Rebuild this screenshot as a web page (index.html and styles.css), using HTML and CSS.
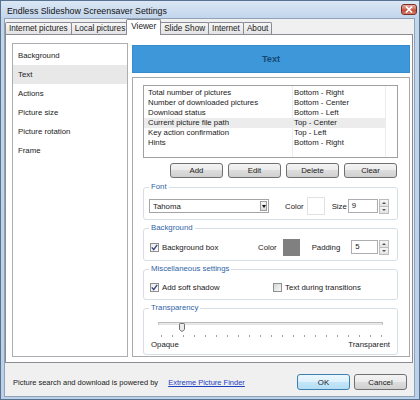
FILE: index.html
```html
<!DOCTYPE html>
<html lang="en">
<head>
  <meta charset="UTF-8" />
  <meta name="viewport" content="width=device-width, initial-scale=1" />
  <title>Endless Slideshow Screensaver Settings</title>
  <link rel="stylesheet" href="styles.css">
</head>
<body>
  <div class="window">
    <div class="titlebar">
      <span class="title">Endless Slideshow Screensaver Settings</span>
      <span class="close-btn">
        <svg width="8" height="7" viewBox="0 0 8 7"><path d="M1 0.5 L7 6.5 M7 0.5 L1 6.5" stroke="#fff" stroke-width="1.7" /></svg>
      </span>
    </div>

    <div class="client">
      <div class="tabs">
        <div class="tab">Internet pictures</div>
        <div class="tab">Local pictures</div>
        <div class="tab active">Viewer</div>
        <div class="tab">Slide Show</div>
        <div class="tab">Internet</div>
        <div class="tab">About</div>
      </div>

      <div class="tab-page">
        <ul class="side-list">
          <li>Background</li>
          <li class="selected">Text</li>
          <li>Actions</li>
          <li>Picture size</li>
          <li>Picture rotation</li>
          <li>Frame</li>
        </ul>

        <div class="content">
          <div class="section-header">Text</div>

          <div class="section-box">
            <!-- text items shown on the screen -->
            <div class="item-list">
              <div class="item-row"><span>Total number of pictures</span><span>Bottom - Right</span></div>
              <div class="item-row"><span>Number of downloaded pictures</span><span>Bottom - Center</span></div>
              <div class="item-row"><span>Download status</span><span>Bottom - Left</span></div>
              <div class="item-row selected"><span>Current picture file path</span><span>Top - Center</span></div>
              <div class="item-row"><span>Key action confirmation</span><span>Top - Left</span></div>
              <div class="item-row"><span>Hints</span><span>Bottom - Right</span></div>
            </div>

            <div class="item-buttons">
              <button class="btn">Add</button>
              <button class="btn">Edit</button>
              <button class="btn">Delete</button>
              <button class="btn">Clear</button>
            </div>

            <fieldset class="group">
              <legend>Font</legend>
              <div class="row font-row">
                <div class="combo"><span>Tahoma</span><span class="combo-arrow"></span></div>
                <span class="font-color-label">Color</span>
                <span class="swatch swatch-white"></span>
                <span class="size-label">Size</span>
                <div class="spin">
                  <span class="spin-field">9</span>
                  <span class="spin-btns"><span class="up"></span><span class="down"></span></span>
                </div>
              </div>
            </fieldset>

            <fieldset class="group">
              <legend>Background</legend>
              <div class="row">
                <label class="check bg-check">
                  <span class="checkbox checked"><svg width="7" height="7" viewBox="0 0 7 7"><path d="M0.8 3.4 L2.7 5.6 L6.2 0.9" fill="none" stroke="#33477c" stroke-width="1.4" /></svg></span>
                  Background box
                </label>
                <span>Color</span>
                <span class="swatch swatch-gray"></span>
                <span class="padding-label">Padding</span>
                <div class="spin spin-narrow">
                  <span class="spin-field">5</span>
                  <span class="spin-btns"><span class="up"></span><span class="down"></span></span>
                </div>
              </div>
            </fieldset>

            <fieldset class="group">
              <legend>Miscellaneous settings</legend>
              <div class="row misc-row">
                <label class="check shadow-check">
                  <span class="checkbox checked"><svg width="7" height="7" viewBox="0 0 7 7"><path d="M0.8 3.4 L2.7 5.6 L6.2 0.9" fill="none" stroke="#33477c" stroke-width="1.4" /></svg></span>
                  Add soft shadow
                </label>
                <label class="check">
                  <span class="checkbox"></span>
                  Text during transitions
                </label>
              </div>
            </fieldset>

            <fieldset class="group">
              <legend>Transparency</legend>
              <div class="slider">
                <div class="slider-track"></div>
                <svg class="slider-thumb" width="6" height="9" viewBox="0 0 6 9"><path d="M0.5 1.2 Q0.5 0.5 1.2 0.5 H4.8 Q5.5 0.5 5.5 1.2 V6.6 L3 8.5 L0.5 6.6 Z" fill="#ececec" stroke="#707070" /></svg>
              </div>
              <div class="ticks"></div>
              <div class="slider-labels"><span>Opaque</span><span>Transparent</span></div>
            </fieldset>
          </div>
        </div>
      </div>

      <div class="footer">
        <span class="powered">Picture search and download is powered by <a href="#">Extreme Picture Finder</a></span>
        <div class="dialog-buttons">
          <button class="btn default">OK</button>
          <button class="btn">Cancel</button>
        </div>
      </div>
    </div>
  </div>
</body>
</html>
```

FILE: styles.css
```css
body {
  margin: 0;
  font-family: 'Liberation Sans', Arial, sans-serif;
  font-size: 7.8px;
  color: #1a1a1a;
  background-color: #c3d5ea;
}

.window {
  width: 420px;
  height: 400px;
  box-sizing: border-box;
  display: flex;
  flex-direction: column;
  border: 1px solid #58738f;
  background: linear-gradient(#dbe7f5, #c2d5eb 17px, #bcd0e8);
}

.titlebar {
  height: 17px;
  flex-shrink: 0;
  display: flex;
  align-items: center;
  justify-content: space-between;
  padding: 0 2px 0 6px;
}

.title {
  font-size: 8.8px;
  padding-top: 2px;
  color: #111;
}

.close-btn {
  width: 16px;
  height: 11px;
  box-sizing: border-box;
  display: flex;
  align-items: center;
  justify-content: center;
  border: 1px solid #7a2f25;
  border-radius: 3px;
  background: linear-gradient(#e8ada0, #d3735f 45%, #c24a36 55%, #d9806a);
}

.client {
  flex: 1;
  display: flex;
  flex-direction: column;
  margin: 0 4px 2px 3px;
  border: 1px solid #8ea2ba;
  background-color: #f0f0f0;
}

/* tab strip */
.tabs {
  height: 15px;
  flex-shrink: 0;
  display: flex;
  align-items: flex-end;
  position: relative;
  z-index: 1;
}

.tab {
  height: 11px;
  line-height: 11px;
  padding: 0 3px;
  margin-right: -1px;
  font-size: 8.2px;
  border: 1px solid #898c95;
  border-bottom: none;
  border-radius: 2px 2px 0 0;
  background: linear-gradient(#f6f6f6, #e3e3e3);
}

.tab.active {
  height: 15px;
  line-height: 14px;
  margin: 0 -1px -1px -2px;
  padding: 0 4px;
  background: #ffffff;
}

.tab-page {
  height: 329px;
  flex-shrink: 0;
  box-sizing: border-box;
  display: flex;
  gap: 4px;
  margin-right: 1px;
  padding: 8px 2px 5px 6px;
  border: 1px solid #898c95;
  background-color: #ffffff;
}

.side-list {
  width: 116px;
  box-sizing: border-box;
  margin: 0;
  padding: 2px 0 0;
  list-style: none;
  border: 1px solid #abadb3;
}

.side-list li {
  height: 19px;
  line-height: 19px;
  padding-left: 5px;
}

.side-list .selected {
  background-color: #e8e8e8;
}

.content {
  flex: 1;
  display: flex;
  flex-direction: column;
  gap: 4px;
  padding-top: 2px;
}

.section-header {
  height: 28px;
  flex-shrink: 0;
  box-sizing: border-box;
  display: flex;
  align-items: center;
  justify-content: center;
  border: 1px solid #368bca;
  background-color: #3e97d8;
  color: #164a75;
  font-size: 9.2px;
  font-weight: bold;
}

.section-box {
  flex: 1;
  border: 1px solid #a9a9a9;
  padding: 7px 11px 0 10px;
}

/* list of text items */
.item-list {
  height: 73px;
  box-sizing: border-box;
  padding-top: 2px;
  border: 1px solid #a0a0a0;
  background:
    linear-gradient(#ececec, #ececec) 148px 0 / 1px 100% no-repeat,
    linear-gradient(#ececec, #ececec) 241px 0 / 1px 100% no-repeat,
    #ffffff;
}

.item-row {
  display: grid;
  grid-template-columns: 148px 93px;
  width: 241px;
  height: 10px;
  line-height: 10px;
  white-space: nowrap;
}

.item-row span:first-child {
  padding-left: 4px;
}

.item-row span:last-child {
  padding-left: 2px;
}

.item-row.selected {
  background-color: #ececec;
}

.item-buttons {
  display: flex;
  justify-content: flex-end;
  gap: 5px;
  margin-top: 5px;
  padding-right: 1px;
}

.btn {
  width: 53px;
  height: 15px;
  padding: 0;
  font: inherit;
  font-size: 7.8px;
  color: #1a1a1a;
  border: 1px solid #707070;
  border-radius: 3px;
  background: linear-gradient(#f3f3f3, #ebebeb 50%, #dddddd 50%, #d0d0d0);
}

.btn.default {
  border-color: #3c7fb1;
  background: linear-gradient(#ecf7fd, #dcf0fc 50%, #c4e6f9 50%, #b4ddf5);
}

/* group boxes */
.group {
  margin: 4px 0 0;
  padding: 5px 5px 4px;
  min-width: 0;
  border: 1px solid #d5dfe5;
  border-radius: 3px;
}

.group + .group {
  margin-top: 3px;
}

.group legend {
  padding: 0 2px;
  line-height: 10px;
  color: #2f64a6;
}

.row {
  display: flex;
  align-items: center;
  height: 18px;
  white-space: nowrap;
}

.misc-row {
  height: 16px;
}

.combo {
  width: 120px;
  height: 14px;
  box-sizing: border-box;
  display: flex;
  align-items: center;
  justify-content: space-between;
  padding: 0 1px 0 3px;
  border: 1px solid #a4a4a4;
  background-color: #ffffff;
}

.combo-arrow {
  width: 7px;
  height: 10px;
  box-sizing: border-box;
  display: flex;
  align-items: center;
  justify-content: center;
  border: 1px solid #9d9d9d;
  background: linear-gradient(#f6f6f6, #dcdcdc);
}

.combo-arrow::after {
  content: "";
  border-left: 2px solid transparent;
  border-right: 2px solid transparent;
  border-top: 3px solid #111;
}

.font-color-label {
  margin-left: 16px;
}

.swatch {
  box-sizing: border-box;
}

.swatch-white {
  width: 18px;
  height: 18px;
  margin-left: 3px;
  border: 1px solid #e2e2e2;
  background-color: #ffffff;
}

.swatch-gray {
  width: 17px;
  height: 17px;
  margin-left: 6px;
  background-color: #808080;
}

.size-label {
  margin-left: 7px;
}

.padding-label {
  margin-left: 12px;
}

.spin {
  display: flex;
  align-items: flex-start;
  height: 15px;
  margin-left: 1px;
}

.spin-narrow {
  margin-left: 11px;
}

.spin-field {
  width: 30px;
  height: 14px;
  box-sizing: border-box;
  padding-left: 3px;
  line-height: 12px;
  border: 1px solid #abadb3;
  background-color: #ffffff;
}

.spin-narrow .spin-field {
  width: 27px;
}

.spin-btns {
  width: 10px;
  height: 15px;
  margin-left: 1px;
  display: flex;
  flex-direction: column;
}

.spin-btns span {
  flex: 1;
  display: flex;
  align-items: center;
  justify-content: center;
  border: 1px solid #bcbcbc;
  background: linear-gradient(#f7f7f7, #e2e2e2);
}

.spin-btns .down {
  border-top: none;
}

.spin-btns .up::after {
  content: "";
  border-left: 2px solid transparent;
  border-right: 2px solid transparent;
  border-bottom: 2px solid #555;
}

.spin-btns .down::after {
  content: "";
  border-left: 2px solid transparent;
  border-right: 2px solid transparent;
  border-top: 2px solid #555;
}

.check {
  display: flex;
  align-items: center;
  margin-left: 1px;
}

.bg-check {
  width: 108px;
}

.shadow-check {
  width: 122px;
}

.checkbox {
  width: 9px;
  height: 9px;
  box-sizing: border-box;
  display: flex;
  align-items: center;
  justify-content: center;
  margin-right: 3px;
  border: 1px solid #8e8f8f;
  background: linear-gradient(135deg, #d6d6d6, #f8f8f8);
}

.checkbox.checked {
  background: linear-gradient(135deg, #e9e9e9, #ffffff);
}

/* transparency slider */
.slider {
  position: relative;
  width: 225px;
  height: 10px;
  margin-left: 9px;
}

.slider-track {
  height: 1px;
  margin-top: 4px;
  border: 1px solid #bdbdbd;
  border-bottom-color: #e4e4e4;
  background-color: #e7eaea;
}

.slider-thumb {
  position: absolute;
  left: 21px;
  top: 1px;
}

.ticks {
  width: 221px;
  height: 2px;
  margin: 3px 0 0 12px;
  background: repeating-linear-gradient(90deg, #a0a0a0 0 1px, transparent 1px 11px);
}

.slider-labels {
  display: flex;
  justify-content: space-between;
  margin-top: 2px;
  padding: 0 2px;
  line-height: 11px;
}

/* bottom of dialog */
.footer {
  flex: 1;
  display: flex;
  align-items: center;
  justify-content: space-between;
  padding: 5px 7px 0 8px;
}

.powered {
  font-size: 7.5px;
}

.powered a {
  margin-left: 8px;
  color: #1c3fc2;
}

.dialog-buttons {
  display: flex;
  gap: 4px;
}

.dialog-buttons .btn {
  height: 16px;
}
```
